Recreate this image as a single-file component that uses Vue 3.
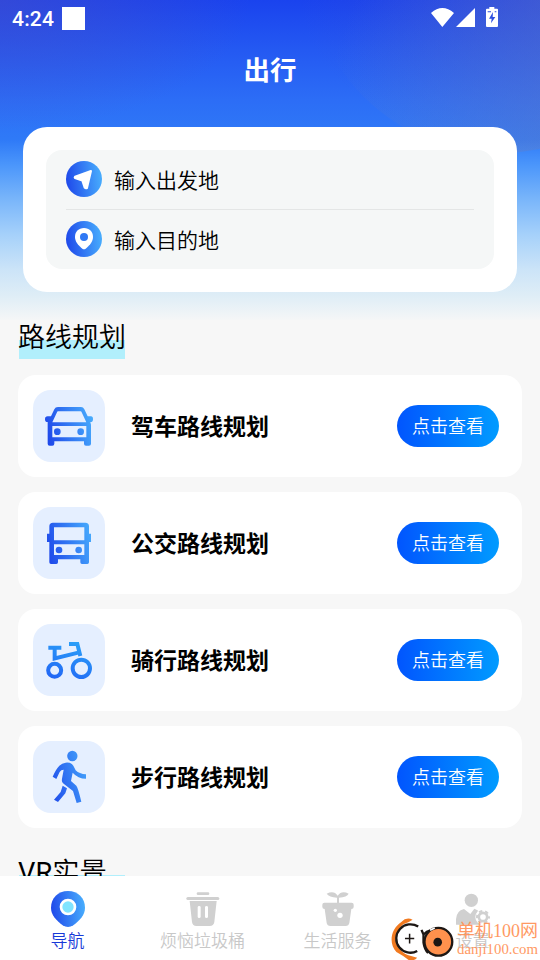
<script setup>
const routes = [
  { name: '驾车路线规划', icon: 'car' },
  { name: '公交路线规划', icon: 'bus' },
  { name: '骑行路线规划', icon: 'bike' },
  { name: '步行路线规划', icon: 'walk' },
]
const tabs = [
  { name: '导航', icon: 'nav', active: true },
  { name: '烦恼垃圾桶', icon: 'trash' },
  { name: '生活服务', icon: 'plant' },
  { name: '设置', icon: 'user' },
]
</script>

<template>
  <div class="page">
    <svg class="defs" width="0" height="0">
      <defs>
        <linearGradient id="blue" gradientUnits="userSpaceOnUse" x1="80" y1="160" x2="218" y2="125">
          <stop offset="0" stop-color="#1f49ea" />
          <stop offset="1" stop-color="#46a9fc" />
        </linearGradient>
        <linearGradient id="bikeBlue" gradientUnits="userSpaceOnUse" x1="120" y1="200" x2="160" y2="80">
          <stop offset="0" stop-color="#2166f5" />
          <stop offset="1" stop-color="#2ba0f8" />
        </linearGradient>
        <linearGradient id="pinBlue" x1="0" y1="0.55" x2="1" y2="0.45">
          <stop offset="0" stop-color="#1f49ea" />
          <stop offset="1" stop-color="#48adfd" />
        </linearGradient>
      </defs>
    </svg>

    <header class="hero">
      <div class="status">
        <span class="clock">4:24</span>
        <i class="notice"></i>
        <svg class="signals" viewBox="90 18 210 66">
          <path fill="#fff" d="M93 39Q127 9 162 39L127 81ZM168 81L225 24V81ZM258 29Q258 26 261 26H268V21H283V26H291Q294 26 294 29V78Q294 81 291 81H261Q258 81 258 78Z" />
          <path fill="#2d4fdf" d="M279 36L267 56H275L273 70L286 51H278ZM263 34H273V37H263ZM284 34H289V37H284Z" />
        </svg>
      </div>
      <h1>出行</h1>
      <section class="search">
        <div class="fields">
          <div class="field">
            <svg class="round" viewBox="138 123 108 108">
              <circle cx="192" cy="177" r="54" fill="url(#pinBlue)" />
              <path fill="#fff" stroke="#fff" stroke-width="6" stroke-linejoin="round" d="M165 170L213 153L201 204Q197 206 194 203L187 182L165 174Q163 172 165 170Z" />
            </svg>
            <span>输入出发地</span>
          </div>
          <div class="field">
            <svg class="round" viewBox="138 303 108 108">
              <circle cx="192" cy="357" r="54" fill="url(#pinBlue)" />
              <path fill="#fff" d="M192 324C176 324 165 336 165 350C165 364 173 374 187 386Q192 390 197 386C211 374 219 364 219 350C219 336 208 324 192 324Z" />
              <circle cx="192" cy="351" r="12" fill="#2f78f4" />
            </svg>
            <span>输入目的地</span>
          </div>
        </div>
      </section>
    </header>

    <main>
      <h2><span>路线规划</span></h2>
      <div class="list">
        <article v-for="r in routes" :key="r.icon" class="card">
          <div class="tile">
            <svg viewBox="39 30 216 216">
              <g v-if="r.icon === 'car'" fill="url(#blue)">
                <path fill-rule="evenodd" d="M114 81H183Q190 81 193 88L203 109H213Q219 109 219 117.500Q219 126 211 126L213 134V191Q213 197 207 197H198Q192 197 192 191V184H103V191Q103 197 97 197H89Q83 197 83 191V126Q75 126 75 117.500Q75 109 83 109H93L103 88Q106 81 114 81ZM114 94Q112 94 111 97L97 127H199L185 97Q184 94 182 94ZM97 138V172H199V138Z" />
                <circle cx="112" cy="155" r="10" />
                <circle cx="182" cy="155" r="10" />
              </g>
              <g v-else-if="r.icon === 'bus'" fill="url(#blue)">
                <path fill-rule="evenodd" d="M99 77H196Q207 77 207 88V110H213V135H207V196Q207 201 202 201H186Q181 201 181 196V187H114V196Q114 201 109 201H93Q88 201 88 196V135H81V110H88V88Q88 77 99 77ZM102 91V130H193V91ZM102 142V174H193V142Z" />
                <circle cx="117" cy="159" r="10" />
                <circle cx="176" cy="159" r="10" />
              </g>
              <g v-else-if="r.icon === 'bike'" fill="none" stroke="url(#bikeBlue)" stroke-width="12">
                <circle cx="104" cy="169" r="19.500" />
                <circle cx="184" cy="163" r="26" stroke-width="12" />
                <path d="M85 101.500H124M104 101V133L178 115M147 90H172L181 126" />
              </g>
              <g v-else fill="url(#blue)">
                <circle cx="157" cy="75" r="15.500" />
                <path d="M137 95Q152 93 160 104L167 118Q178 129 198 130V143Q174 143 158 125L153 150L169 164Q174 170 184 212L170 216L159 180L131 158Q124 153 126 143L131 116Q123 116 119 123L109 144L98 137Q108 114 118 104Q126 96 137 95ZM128 164L141 172L136 187L114 213L102 206L122 183Z" />
              </g>
            </svg>
          </div>
          <span class="name">{{ r.name }}</span>
          <button>点击查看</button>
        </article>
      </div>
      <h2 class="second"><span>VR实景</span></h2>
    </main>

    <nav>
      <div v-for="t in tabs" :key="t.icon" class="tab" :class="{ active: t.active }">
        <svg v-if="t.icon === 'nav'" viewBox="147 150 108 114">
          <path fill="url(#pinBlue)" d="M201 153C171 153 150 175 150 203C150 225 166 241 185 256Q201 266 217 256C236 241 252 225 252 203C252 175 231 153 201 153Z" />
          <circle cx="201" cy="201" r="21" fill="#81e4ff" stroke="#fff" stroke-width="8" />
        </svg>
        <svg v-else-if="t.icon === 'trash'" viewBox="552 150 108 114" fill="#d0d0d0">
          <rect x="587" y="157" width="38" height="8" rx="4" />
          <rect x="556" y="171" width="99" height="9" rx="4.500" />
          <path fill-rule="evenodd" d="M566 183H647L640 246Q638 258 626 258H586Q575 258 573 246ZM590 202V230Q590 234 594.500 234Q599 234 599 230V202Q599 198 594.500 198Q590 198 590 202ZM612 202V230Q612 234 616.500 234Q621 234 621 230V202Q621 198 616.500 198Q612 198 612 202Z" />
        </svg>
        <svg v-else-if="t.icon === 'plant'" viewBox="148 60 108 114">
          <path fill="#d0d0d0" d="M168 71Q190 60 201 77Q213 60 234 71Q229 81 205 83V98H243Q249 98 249 104V111Q249 117 242 117L236 159Q234 168 225 168H179Q170 168 168 159L162 117Q155 117 155 111V104Q155 98 161 98H199V83Q175 81 168 71Z" />
          <circle cx="194" cy="121" r="5" fill="#fff" />
          <circle cx="208" cy="136" r="8" fill="#fff" />
        </svg>
        <svg v-else viewBox="222 31 108 114">
          <circle cx="271" cy="62" r="20" fill="#d0d0d0" />
          <path fill="#d0d0d0" d="M225 135V119Q226 93 249 88L268 103L280 87Q291 90 296 99L300 135Z" />
          <circle cx="306" cy="112" r="23" fill="#fff" />
          <circle cx="306" cy="112" r="12.500" fill="none" stroke="#d0d0d0" stroke-width="8" />
          <circle cx="306" cy="112" r="18" fill="none" stroke="#d0d0d0" stroke-width="6" stroke-dasharray="10 8.850" stroke-dashoffset="5" />
        </svg>
        <span>{{ t.name }}</span>
      </div>
    </nav>

    <aside class="mark">
      <svg viewBox="33 110 190 130">
        <path fill="#f17a20" d="M98 118Q79 109 64 125C30 148 26 191 49 216Q72 229 85 239Q101 245 112 233L83 225C43 207 38 158 70 132Q85 127 98 118Z" />
        <circle cx="90" cy="176" r="43" fill="#fff" />
        <path fill="none" stroke="#1d1714" stroke-width="7" d="M115 139A43 43 0 1 0 112 213M125 149L131 163V187Q134 207 145 219M131 163Q140 154 154 150" />
        <circle cx="176" cy="185" r="42" fill="#ff914d" stroke="#1d1714" stroke-width="7" />
        <circle cx="174" cy="186" r="13" fill="#1d1714" />
        <path stroke="#1d1714" stroke-width="4.500" d="M75 175H103M89 161V190" />
        <path fill="none" stroke="#fff" stroke-width="5" d="M151 150L165 143" />
      </svg>
      <div class="marktext">
        <b>单机100网</b>
        <em>danji100.com</em>
      </div>
    </aside>
  </div>
</template>

<style>
body { background: #f7f7f7; }
</style>

<style scoped>
* { box-sizing: border-box; }
.page {
  position: relative;
  width: 540px;
  height: 960px;
  overflow: hidden;
  display: flex;
  flex-direction: column;
  background: #f7f7f7;
  color: #000;
  font-family: "Noto Sans CJK SC", sans-serif;
  font-weight: 350;
}
.defs { position: absolute; }
svg { display: block; flex: none; }
.hero {
  position: relative;
  overflow: hidden;
  flex: none;
  height: 320px;
  background:
    radial-gradient(ellipse 250px 130px at 0 0, rgba(75, 78, 195, .5), transparent),
    radial-gradient(ellipse 240px 150px at 540px 0, rgba(80, 85, 190, .35), transparent),
    linear-gradient(#1a43ee 0, #2459f2 50px, #2c6df6 100px, #2f7af7 140px, #4b96fb 165px, #7ab6fa 200px, #a6d1fa 235px, #cce4f8 270px, #deedf6 295px, #f5f6f7 320px);
}
.hero::before {
  content: "";
  position: absolute;
  left: 307px;
  top: -233px;
  width: 386px;
  height: 386px;
  border-radius: 50%;
  background: linear-gradient(110deg, rgba(100, 125, 195, 0) 25%, rgba(100, 125, 195, .44) 75%);
}
.status, h1, .search { position: relative; }
.status {
  height: 36px;
  display: flex;
  align-items: center;
  padding-left: 12px;
  color: #fff;
}
.clock { width: 50px; font: 500 21px/24px Roboto, sans-serif; letter-spacing: .2px; padding-top: 2px; }
.notice { width: 23px; height: 23px; background: #fff; }
.signals { width: 70px; height: 22px; margin: 0 0 2px 345px; }
h1 {
  margin: 14px 0 0;
  height: 77px;
  color: #fff;
  font-size: 26.5px;
  line-height: 38px;
  font-weight: 700;
  text-align: center;
}
.search {
  margin: 0 23px;
  height: 165px;
  padding: 23px;
  border-radius: 24px;
  background: #fff;
}
.fields {
  height: 119px;
  padding: 0 20px;
  border-radius: 16px;
  background: #f5f7f7;
}
.field {
  height: 59px;
  display: flex;
  align-items: center;
  gap: 12px;
  padding-bottom: 2px;
  font-size: 21px;
  line-height: 30px;
}
.field + .field { height: 60px; border-top: 1px solid #e4e6e6; }
.round { width: 36px; height: 36px; }
main { flex: none; padding: 0 18px; }
h2 {
  margin: 0;
  height: 55px;
  font-size: 27px;
  line-height: 32px;
  font-weight: 350;
}
h2 span {
  display: block;
  width: 108px;
  height: 39px;
  background: linear-gradient(#b1effc, #b1effc) 1px 20px / 106px 19px no-repeat;
}
.second { margin-top: 29px; font-family: Roboto, "Noto Sans CJK SC DemiLight", "Noto Sans CJK SC", sans-serif; font-size: 27.3px; font-weight: 400; }
.second span { background-position: 1px 18px; }
.list { display: flex; flex-direction: column; gap: 15px; }
.card {
  height: 102px;
  display: flex;
  align-items: center;
  padding: 0 23px 0 15px;
  border-radius: 18px;
  background: #fff;
}
.tile { width: 72px; height: 72px; border-radius: 18px; background: #e5efff; }
.name { flex: 1; margin-left: 26px; font-size: 23px; line-height: 34px; font-weight: 700; padding-bottom: 2px; }
button {
  width: 102px;
  height: 42px;
  padding: 0 0 2px;
  border: 0;
  border-radius: 21px;
  background: linear-gradient(90deg, #0155fe, #019bff);
  color: #fff;
  font: 350 18px/26px "Noto Sans CJK SC", sans-serif;
}
nav {
  position: absolute;
  left: 0;
  right: 0;
  bottom: 0;
  height: 84px;
  display: flex;
  background: #fff;
}
.tab {
  width: 135px;
  display: flex;
  flex-direction: column;
  align-items: center;
  padding-top: 14px;
  color: #c8c8c8;
  font-size: 17px;
  line-height: 24px;
}
.tab svg { width: 36px; height: 38px; }
.active { color: #1739d8; }
.mark { position: absolute; left: 391px; top: 917px; display: flex; }
.mark svg { width: 63px; height: 43px; }
.marktext { margin-left: 3px; padding-top: 2px; color: #ff8f52; opacity: .9; }
.marktext b, .marktext em { display: block; font-style: normal; font-weight: 400; white-space: nowrap; }
.marktext b { font-size: 18px; line-height: 24px; font-family: "Liberation Serif", "Noto Sans CJK SC", serif; }
.marktext em { font-size: 14.8px; line-height: 13px; font-family: "Liberation Serif", serif; }
</style>
